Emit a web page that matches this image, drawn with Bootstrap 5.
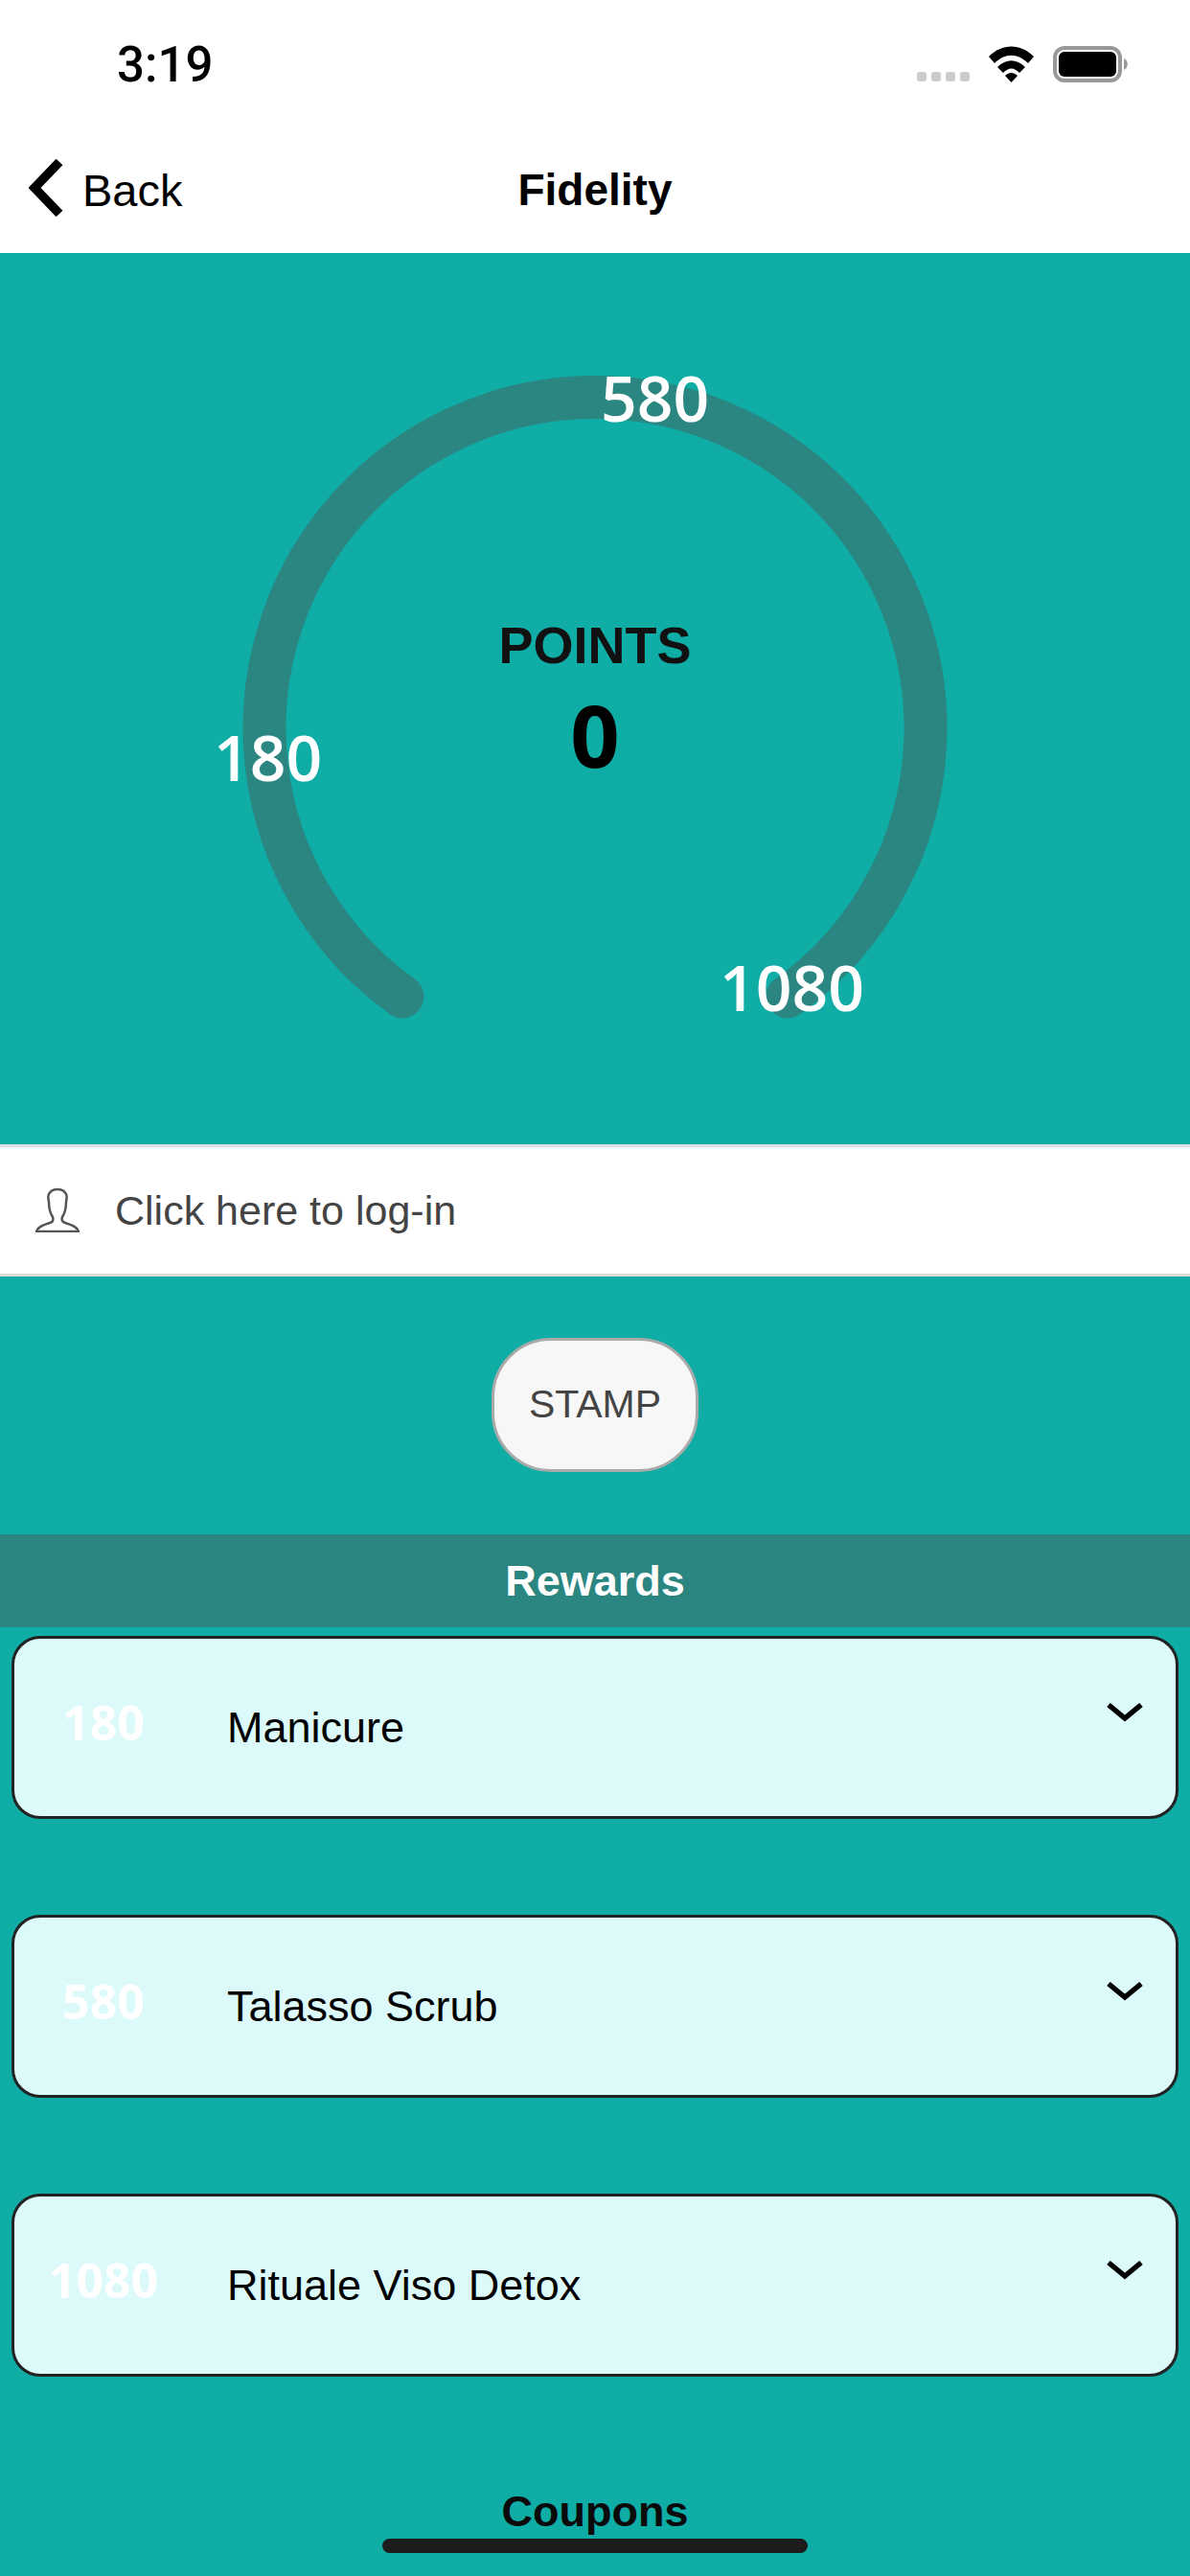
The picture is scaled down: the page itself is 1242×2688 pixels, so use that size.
<!DOCTYPE html>
<html lang="en">
<head>
    <meta charset="UTF-8">
    <meta name="viewport" content="width=device-width, initial-scale=1.0">
    <title>Fidelity</title>
    <link href="https://cdn.jsdelivr.net/npm/bootstrap@5.3.0/dist/css/bootstrap.min.css" rel="stylesheet">
    <style>
        html, body {
            height: 2688px;
            overflow: hidden;
        }
        body {
            background-color: #0fada6;
            font-family: "Liberation Sans", Arial, sans-serif;
            color: #000;
        }
        .app-screen {
            position: relative;
            height: 2688px;
            overflow: hidden;
        }
        .status-bar {
            height: 134px;
            background: #fff;
            padding: 48px 64px 0 122px;
        }
        .status-time {
            font-family: Roboto, sans-serif;
            font-size: 51px;
            font-weight: 500;
            line-height: 40px;
        }
        .status-icons {
            gap: 20px;
        }
        .status-signal {
            gap: 5px;
            margin-top: 27px;
        }
        .signal-dot {
            width: 10px;
            height: 10px;
            border-radius: 3px;
            background: #ccc;
        }
        .top-nav {
            position: relative;
            height: 130px;
            background: #fff;
            padding-left: 30px;
        }
        .back-arrow {
            margin-bottom: 7px;
        }
        .back-label {
            font-size: 47px;
            margin-left: 19px;
            margin-bottom: 2px;
            line-height: 1;
        }
        .nav-title {
            position: absolute;
            left: 0;
            right: 0;
            top: 41px;
            text-align: center;
            font-size: 46px;
            line-height: 1;
            font-weight: 700;
        }
        .gauge-area {
            position: relative;
            height: 930px;
        }
        .gauge-area svg {
            position: absolute;
            left: 0;
            top: 0;
        }
        .gauge-num {
            position: absolute;
            font-family: "Open Sans", sans-serif;
            font-weight: 650;
            font-size: 66px;
            line-height: 1;
            color: #fff;
        }
        .num-180 { left: 223px; top: 492px; }
        .num-580 { left: 627px; top: 117px; }
        .num-1080 { left: 751px; top: 732px; }
        .gauge-center {
            position: absolute;
            left: 0;
            right: 0;
            top: 382px;
            text-align: center;
        }
        .points-label {
            font-size: 54px;
            font-weight: 700;
            line-height: 1;
            color: #111;
        }
        .points-value {
            font-family: "Open Sans", sans-serif;
            font-size: 90px;
            font-weight: 700;
            line-height: 1;
            margin-top: 21px;
        }
        .login-row {
            height: 138px;
            background: #fff;
            border-top: 3px solid #dfe0e6;
            border-bottom: 3px solid #dcdcdc;
            padding-left: 37px;
            font-size: 43px;
            color: #444;
            gap: 37px;
        }
        .stamp-wrap {
            height: 269px;
            padding-bottom: 2px;
        }
        .stamp-btn {
            width: 216px;
            height: 140px;
            padding: 0;
            background: #f7f7f7;
            border: 3px solid #aaa;
            border-radius: 62px;
            font-size: 41px;
            color: #444;
        }
        .rewards-bar {
            height: 97px;
            background: #2b8682;
            color: #fff;
            font-size: 45px;
            font-weight: 700;
        }
        .reward-list {
            padding: 9px 12px 0;
            gap: 100px;
        }
        .reward-item {
            position: relative;
            height: 191px;
            background: #dcfafa;
            border: 3px solid #222;
            border-radius: 30px;
            padding-left: 222px;
            font-size: 45px;
        }
        .reward-pts {
            position: absolute;
            left: 0;
            width: 186px;
            top: 62px;
            text-align: center;
            font-family: "Open Sans", sans-serif;
            font-weight: 700;
            font-size: 50px;
            line-height: 1;
            color: #fff;
        }
        .reward-arrow {
            position: absolute;
            right: 34px;
            top: 66px;
        }
        .coupons-title {
            position: absolute;
            left: 0;
            right: 0;
            top: 2596px;
            text-align: center;
            font-size: 45px;
            font-weight: 700;
            line-height: 1.1;
            color: #0a0a0a;
        }
        .home-bar {
            position: absolute;
            left: 399px;
            top: 2649px;
            width: 444px;
            height: 15px;
            border-radius: 8px;
            background: #1c1c1c;
        }
    </style>
</head>
<body>
    <div class="app-screen">
        <!-- Status bar -->
        <div class="status-bar d-flex justify-content-between">
            <div class="status-time">3:19</div>
            <div class="status-icons d-flex align-items-start">
                <div class="status-signal d-flex">
                    <span class="signal-dot"></span><span class="signal-dot"></span><span class="signal-dot"></span><span class="signal-dot"></span>
                </div>
                <svg width="47" height="38" viewBox="0 0 47 38">
                    <path d="M0 11 C14 -3 33 -3 47 11 L41 18 C30 7 17 7 6 18 Z" fill="#000"/>
                    <path d="M9 22 C18 13 29 13 38 22 L32 28 C26 22 21 22 15 28 Z" fill="#000"/>
                    <path d="M17 31 C21 27 26 27 30 31 L23.5 38 Z" fill="#000"/>
                </svg>
                <svg width="79" height="38" viewBox="0 0 79 38">
                    <rect x="2" y="2" width="68" height="34" rx="10" fill="none" stroke="#999" stroke-width="4"/>
                    <rect x="6" y="6" width="60" height="26" rx="6" fill="#000"/>
                    <path d="M74 13 C79 15 79 23 74 25 Z" fill="#999"/>
                </svg>
            </div>
        </div>

        <!-- Nav -->
        <div class="top-nav d-flex align-items-center">
            <svg class="back-arrow" width="37" height="60" viewBox="0 0 37 60">
                <path d="M32 3 L6 30 L32 57" fill="none" stroke="#000" stroke-width="9.5"/>
            </svg>
            <span class="back-label">Back</span>
            <div class="nav-title">Fidelity</div>
        </div>

        <!-- Gauge -->
        <div class="gauge-area">
            <svg width="1242" height="930" viewBox="0 0 1242 930">
                <path d="M420 776 A345 345 0 1 1 822 776" fill="none" stroke="#2b8682" stroke-width="45" stroke-linecap="round"/>
            </svg>
            <div class="gauge-center">
                <div class="points-label">POINTS</div>
                <div class="points-value">0</div>
            </div>
            <span class="gauge-num num-180">180</span>
            <span class="gauge-num num-580">580</span>
            <span class="gauge-num num-1080">1080</span>
        </div>

        <!-- Login -->
        <div class="login-row d-flex align-items-center">
            <svg width="46" height="46" viewBox="0 0 46 46">
                <path d="M1 45 C3 39 10 38 15 36 C18 35 19 33 18 30 C16 27 14 22 14 14 C13 10 13 8 14 6 C16 2 19 1 23 1 C27 1 30 2 32 6 C33 8 33 10 32 14 C32 22 30 27 28 30 C27 33 28 35 31 36 C36 38 43 39 45 45 Z" fill="none" stroke="#555" stroke-width="2.5" stroke-linejoin="round"/>
            </svg>
            <span>Click here to log-in</span>
        </div>

        <!-- Stamp -->
        <div class="stamp-wrap d-flex justify-content-center align-items-center">
            <button type="button" class="btn stamp-btn">STAMP</button>
        </div>

        <!-- Rewards -->
        <div class="rewards-bar d-flex justify-content-center align-items-center">Rewards</div>
        <div class="reward-list d-flex flex-column">
            <div class="reward-item d-flex align-items-center">
                <span class="reward-pts">180</span>
                <span>Manicure</span>
                <svg class="reward-arrow" width="38" height="22" viewBox="0 0 38 22"><path d="M2 3 L19 17 L36 3" fill="none" stroke="#000" stroke-width="5.5"/></svg>
            </div>
            <div class="reward-item d-flex align-items-center">
                <span class="reward-pts">580</span>
                <span>Talasso Scrub</span>
                <svg class="reward-arrow" width="38" height="22" viewBox="0 0 38 22"><path d="M2 3 L19 17 L36 3" fill="none" stroke="#000" stroke-width="5.5"/></svg>
            </div>
            <div class="reward-item d-flex align-items-center">
                <span class="reward-pts">1080</span>
                <span>Rituale Viso Detox</span>
                <svg class="reward-arrow" width="38" height="22" viewBox="0 0 38 22"><path d="M2 3 L19 17 L36 3" fill="none" stroke="#000" stroke-width="5.5"/></svg>
            </div>
        </div>

        <div class="coupons-title">Coupons</div>
        <div class="home-bar"></div>
    </div>

    <script src="https://cdn.jsdelivr.net/npm/bootstrap@5.3.0/dist/js/bootstrap.bundle.min.js"></script>
</body>
</html>
